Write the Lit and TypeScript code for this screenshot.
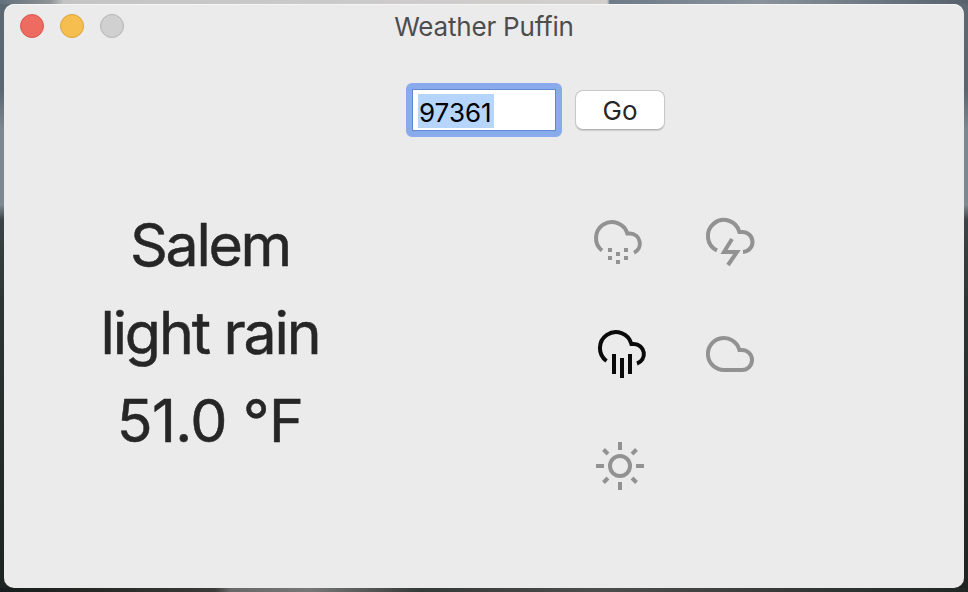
import { LitElement, html, css, svg } from "lit";
import { customElement, property } from "lit/decorators.js";

const glyphs = {
  snow: svg`<path d="M8 32.5 A16 16 0 1 1 33.4 15.6 H36 A10 10 0 0 1 40 34.7"/>
    <path stroke="none" fill="currentColor" d="M14 30h4v4h-4zM22 34h4v4h-4zM30 30h4v4h-4zM14 38h4v4h-4zM22 42h4v4h-4zM30 38h4v4h-4z"/>`,
  storm: svg`<path d="M11 32.4 A16 16 0 1 1 33.4 14 H36 A10 10 0 0 1 37 34"/><path d="M26 21 L18 34 H31 L22 47"/>`,
  rain: svg`<path d="M8.5 31 A16 16 0 1 1 33.4 14 H36 A10 10 0 0 1 39 33.5"/><path d="M16 24V44M24 28V48M32 24V44"/>`,
  cloud: svg`<path d="M18 40 A16 16 0 1 1 33.4 20 H36 A10 10 0 0 1 36 40 Z"/>`,
  sun: svg`<circle cx="24" cy="24" r="10"/><path d="M24 0V8M24 40V48M0 24H8M40 24H48M7.5 7.5L12 12M36 36L40.5 40.5M40.5 7.5L36 12M12 36L7.5 40.5"/>`,
};

@customElement("weather-icon")
class WeatherIcon extends LitElement {
  @property() name: keyof typeof glyphs = "sun";
  static styles = css`
    :host { display: block; width: 48px; height: 48px; }
    svg { display: block; fill: none; stroke: currentColor; stroke-width: 4; overflow: visible; }
  `;
  render() {
    return html`<svg width="48" height="48" viewBox="0 0 48 48">${glyphs[this.name]}</svg>`;
  }
}

@customElement("app-root")
class AppRoot extends LitElement {
  static styles = css`
    :host {
      display: block; box-sizing: border-box; width: 968px; height: 592px; padding: 4px; overflow: hidden;
      font-family: Inter, "Liberation Sans", sans-serif;
      background:
        linear-gradient(90deg, #63707b, #8d9295 50px, #c4c4c4 64px, #d2d0cf 607px, #6d7a88 610px, #8a939c 760px, #56616c) top / 100% 4px no-repeat,
        linear-gradient(90deg, #171d1c, #2b2f2b 130px, #3b3b39 215px, #686868 230px, #777 310px, #343a38 420px, #4a4d4b 600px, #202725) bottom / 100% 4px no-repeat,
        linear-gradient(#5c6973, #5a6670 90px, #7d8890 130px, #7d8890 205px, #3a4446 220px, #2d3534 300px, #1c2321);
    }
    .window { display: flex; flex-direction: column; height: 584px; background: #ebebeb; border-radius: 10px; overflow: hidden; box-shadow: inset 0 1px #f5f5f5; }
    .titlebar { display: grid; grid-template-columns: 1fr auto 1fr; height: 44px; align-items: center; color: #4d4d4d; }
    .lights { display: flex; gap: 16px; padding-left: 16px; }
    .light { width: 24px; height: 24px; box-sizing: border-box; border-radius: 50%; border: 1px solid #d9584e; background: #ed6b60; }
    .min { background: #f5be4f; border-color: #d9a23c; }
    .max { background: #d0d0d0; border-color: #b4b4b4; }
    .title { font-size: 26px; line-height: 42px; padding-top: 2px; letter-spacing: -0.2px; white-space: nowrap; }
    .search { display: flex; gap: 13px; padding: 35px 0 0 402px; }
    .field { box-sizing: border-box; width: 156px; height: 54px; border: 6px solid #89abec; border-radius: 6px; }
    .inner { box-sizing: border-box; height: 42px; border: 1px solid #6288d4; background: #fff; padding: 4px 0 0 5px; }
    .selected { display: block; width: 76px; height: 34px; line-height: 37px; background: #b5d5fd; color: #000; font-size: 26px; letter-spacing: 0; text-indent: 1px; white-space: nowrap; }
    .go { box-sizing: border-box; font: inherit; font-size: 26px; line-height: 36px; color: #262626; width: 90px; height: 40px; margin-top: 7px; padding: 2px 0 0; border: 1px solid #c8c8c8; border-bottom-color: #b5b5b5; border-radius: 8px; background: #fff; box-shadow: 0 1px 1px #0002; }
    .content { display: flex; padding-top: 63px; }
    .report { width: 412px; text-align: center; color: #262626; font-size: 59px; -webkit-text-stroke: 0.5px #262626; line-height: 88px; padding-top: 1px; }
    .line { white-space: nowrap; }
    .city { letter-spacing: -2.3px; }
    .sky { letter-spacing: -2.1px; }
    .temp { letter-spacing: -0.6px; }
    .icons { display: grid; grid-template-columns: 48px 48px; gap: 64px; margin: 18px 0 0 178px; color: #929292; align-content: start; }
    .active { color: #0a0a0a; margin-left: 4px; }
    .clear { margin-left: 2px; }
  `;
  render() {
    return html`
      <main class="window">
        <header class="titlebar">
          <div class="lights"><span class="light"></span><span class="light min"></span><span class="light max"></span></div>
          <div class="title">Weather Puffin</div>
        </header>
        <div class="search">
          <div class="field"><div class="inner"><span class="selected">97361</span></div></div>
          <button class="go">Go</button>
        </div>
        <div class="content">
          <div class="report">
            <div class="line city">Salem</div>
            <div class="line sky">light rain</div>
            <div class="line temp">51.0 °F</div>
          </div>
          <div class="icons">
            <weather-icon name="snow"></weather-icon>
            <weather-icon name="storm"></weather-icon>
            <weather-icon class="active" name="rain"></weather-icon>
            <weather-icon name="cloud"></weather-icon>
            <weather-icon class="clear" name="sun"></weather-icon>
          </div>
        </div>
      </main>`;
  }
}
